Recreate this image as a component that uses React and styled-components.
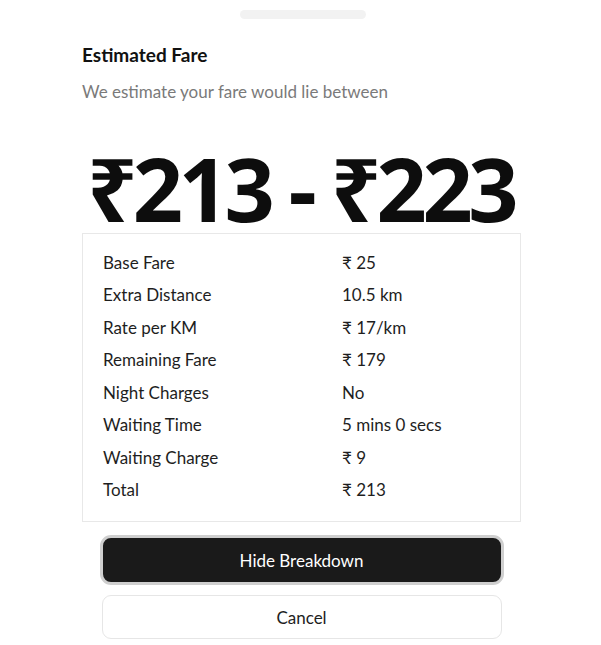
import React from "react";
import styled, { createGlobalStyle } from "styled-components";

const Global = createGlobalStyle`
  html, body { margin: 0; padding: 0; background: #fff; }
  body { font-family: "Lato", "Noto Sans", sans-serif; color: #1a1a1a; }
  * { box-sizing: border-box; }
`;

const Sheet = styled.div`
  width: 601px;
  min-height: 645px;
  background: #fff;
  display: flex;
  flex-direction: column;
  padding: 10px 0 0;
  & > * { flex-shrink: 0; }
`;

const Handle = styled.div`
  align-self: center;
  width: 126px;
  height: 9px;
  border-radius: 5px;
  background: #f2f2f2;
  margin-left: 4px;
`;

const Header = styled.div`
  padding: 24px 82px 0;
  display: flex;
  flex-direction: column;
  gap: 14px;
`;

const Title = styled.h2`
  margin: 0;
  font-size: 19px;
  font-weight: 700;
  color: #111;
  line-height: 24px;
`;

const Subtitle = styled.p`
  margin: 0;
  font-size: 17px;
  color: #7a7a7a;
  line-height: 22px;
`;

const Range = styled.div`
  margin-top: 40px;
  text-align: center;
  font-family: "Open Sans", "Noto Sans", sans-serif;
  font-weight: 700;
  font-size: 88px;
  line-height: 90px;
  letter-spacing: -4.5px;
  color: #0d0d0d;
  white-space: nowrap;
`;

const Table = styled.div`
  margin: 0 80px 0 82px;
  border: 1px solid #e8e8e8;
  padding: 12px 20px 15px;
  display: grid;
  grid-template-columns: 239px 1fr;
  grid-auto-rows: 32.5px;
  align-items: center;
`;

const Cell = styled.div`
  font-size: 17px;
  color: #1e1e1e;
`;

const Actions = styled.div`
  display: flex;
  flex-direction: column;
  align-items: center;
  gap: 10px;
  margin-top: 13px;
`;

const PrimaryButton = styled.button`
  width: 404px;
  height: 50px;
  border-radius: 11px;
  background: #1a1a1a;
  border: 3px solid #cfcfcf;
  color: #fff;
  font-family: inherit;
  font-size: 17px;
  margin-left: 2px;
`;

const SecondaryButton = styled.button`
  width: 400px;
  height: 44px;
  border-radius: 9px;
  background: #fff;
  border: 1px solid #e6e6e6;
  color: #1e1e1e;
  font-family: inherit;
  font-size: 17px;
  margin-left: 2px;
`;

const rows = [
  ["Base Fare", "₹ 25"],
  ["Extra Distance", "10.5 km"],
  ["Rate per KM", "₹ 17/km"],
  ["Remaining Fare", "₹ 179"],
  ["Night Charges", "No"],
  ["Waiting Time", "5 mins 0 secs"],
  ["Waiting Charge", "₹ 9"],
  ["Total", "₹ 213"],
];

export default function App() {
  return (
    <>
      <Global />
      <Sheet>
        <Handle />
        <Header>
          <Title>Estimated Fare</Title>
          <Subtitle>We estimate your fare would lie between</Subtitle>
        </Header>
        <Range>₹213 - ₹223</Range>
        <Table>
          {rows.map(([k, v]) => (
            <React.Fragment key={k}>
              <Cell>{k}</Cell>
              <Cell>{v}</Cell>
            </React.Fragment>
          ))}
        </Table>
        <Actions>
          <PrimaryButton>Hide Breakdown</PrimaryButton>
          <SecondaryButton>Cancel</SecondaryButton>
        </Actions>
      </Sheet>
    </>
  );
}
